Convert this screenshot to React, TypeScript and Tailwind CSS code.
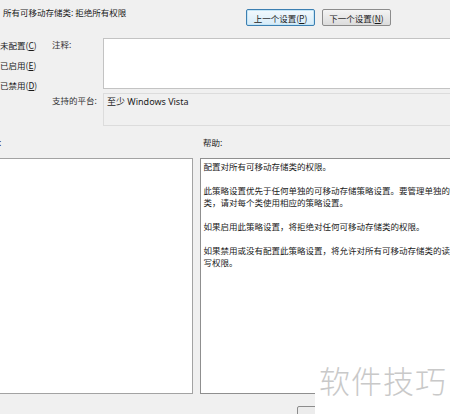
const cjk = "font-['Microsoft_YaHei','Noto_Sans_CJK_SC',sans-serif]";

function Key({ k }: { k: string }) {
  return (
    <>
      (<span className="underline underline-offset-1">{k}</span>)
    </>
  );
}

export default function App() {
  return (
    <div
      className={`relative h-[414px] w-[450px] overflow-hidden bg-[#f0f0f0] text-[8.5px] leading-[12px] text-[#1a1a1a] ${cjk}`}
    >
      {/* header */}
      <div className="flex h-[38px]">
        <div className="w-[246px] whitespace-nowrap pl-[3px] pt-[6px]">所有可移动存储类: 拒绝所有权限</div>
        <div className="flex gap-[7px] pt-[9px]">
          <button className="flex h-[17px] w-[69px] items-center justify-center rounded-[2px] border border-[#3c7fb1] bg-gradient-to-b from-[#f2f9fd] to-[#d6ebf8] text-[8.5px] shadow-[inset_0_0_0_1px_#c4e5f6]">
            上一个设置<Key k="P" />
          </button>
          <button className="flex h-[17px] w-[69px] items-center justify-center rounded-[2px] border border-[#8c8c8c] bg-gradient-to-b from-[#f4f4f4] to-[#dcdcdc] text-[8.5px]">
            下一个设置<Key k="N" />
          </button>
        </div>
      </div>

      {/* settings area */}
      <div className="flex h-[88px]">
        <div className="flex w-[52px] flex-col gap-[8px] pt-[1px]">
          <div className="whitespace-nowrap">未配置<Key k="C" /></div>
          <div className="whitespace-nowrap">已启用<Key k="E" /></div>
          <div className="whitespace-nowrap">已禁用<Key k="D" /></div>
        </div>
        <div className="flex flex-1 flex-col">
          <div className="flex h-[51px]">
            <div className="w-[51px] pt-[0px] text-[#333]">注释:</div>
            <div className="flex-1 border border-r-0 border-[#c3c3c3] bg-white"></div>
          </div>
          <div className="mt-[4px] flex h-[33px]">
            <div className="w-[51px] pt-[1px] text-[#333]">支持的平台:</div>
            <div className="flex-1 border border-r-0 border-[#dcdcdc] bg-[#f0f0f0] pl-[3px] pt-[2px] font-['Segoe_UI','Noto_Sans',sans-serif] text-[9px] text-[#222]">
              <span className={cjk}>至少</span> Windows Vista
            </div>
          </div>
        </div>
      </div>

      {/* section labels */}
      <div className="flex h-[32px] items-center">
        <div className="w-[203px] -translate-x-[1px]">:</div>
        <div>帮助:</div>
      </div>

      {/* panels */}
      <div className="flex h-[236px] gap-[7px]">
        <div className="-ml-[2px] w-[196px] border border-[#a3a3a3] bg-white"></div>
        <div className="flex-1 border border-r-0 border-[#8f8f8f] bg-white pl-[2px] pt-[1px] whitespace-nowrap">
          <p>配置对所有可移动存储类的权限。</p>
          <p className="mt-[12px]">
            此策略设置优先于任何单独的可移动存储策略设置。要管理单独的
            <br />
            类，请对每个类使用相应的策略设置。
          </p>
          <p className="mt-[12px]">如果启用此策略设置，将拒绝对任何可移动存储类的权限。</p>
          <p className="mt-[12px]">
            如果禁用或没有配置此策略设置，将允许对所有可移动存储类的读
            <br />
            写权限。
          </p>
        </div>
      </div>

      {/* bottom bar */}
      <div className="flex h-[20px] pl-[297px] pt-[12px]">
        <div className="h-[20px] w-[40px] rounded-tl-[2px] border border-[#8c8c8c] bg-[#ececec]"></div>
      </div>

      {/* watermark */}
      <div className="absolute left-[315px] top-[356px] flex h-[58px] w-[135px] items-start bg-white pl-[4px] pt-[6px]">
        <span className="whitespace-nowrap text-[31px] font-light leading-[36px] tracking-[1px] text-[#c9c9c9]">
          软件技巧
        </span>
      </div>
    </div>
  );
}
